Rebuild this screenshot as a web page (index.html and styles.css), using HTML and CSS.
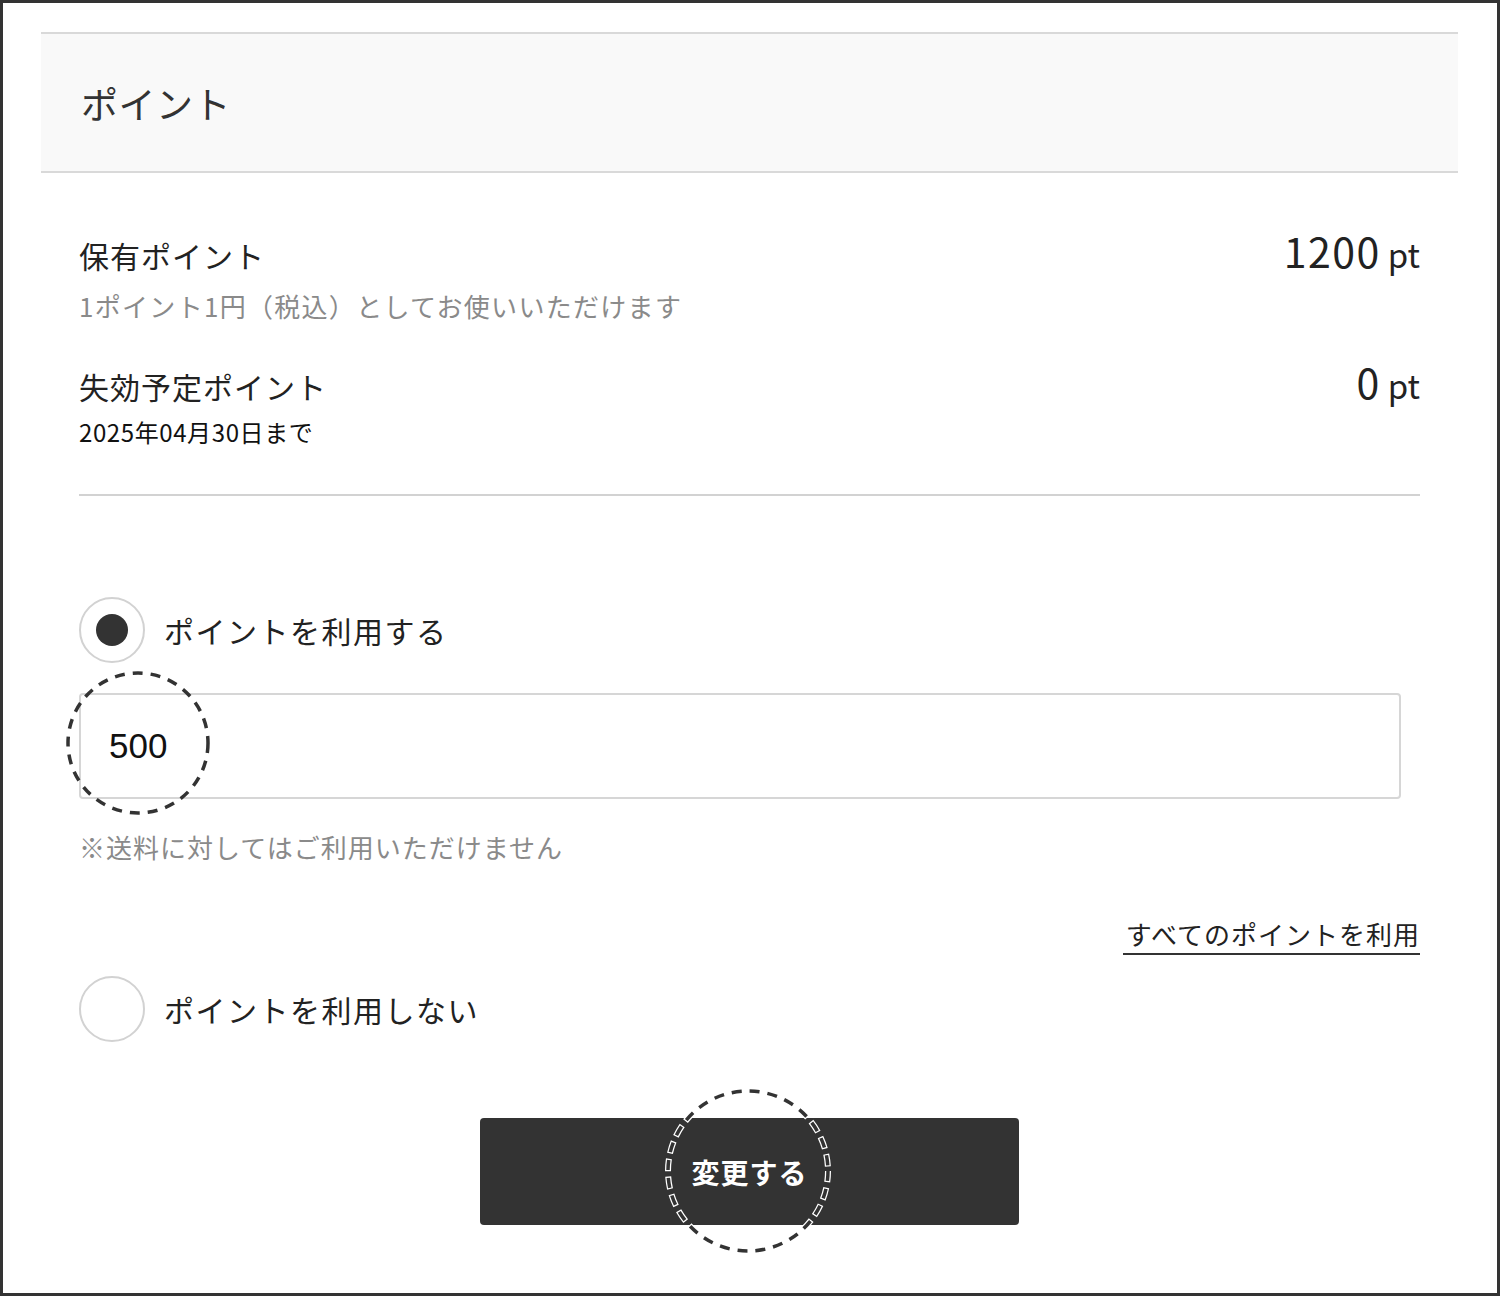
FILE: index.html
```html
<!DOCTYPE html>
<html lang="ja">
<head>
<meta charset="utf-8">
<title>ポイント</title>
<link rel="stylesheet" href="styles.css">
</head>
<body>
<div class="page">
  <div class="panel-head">
    <h2 class="panel-title">ポイント</h2>
  </div>
  <div class="panel-body">
    <div class="info-row first">
      <div class="info-left">
        <div class="info-label">保有ポイント</div>
        <div class="info-sub">1ポイント1円（税込）としてお使いいただけます</div>
      </div>
      <div class="info-value"><span class="num">1200</span><span class="unit">pt</span></div>
    </div>
    <div class="info-row second">
      <div class="info-left">
        <div class="info-label">失効予定ポイント</div>
        <div class="info-date">2025年04月30日まで</div>
      </div>
      <div class="info-value"><span class="num">0</span><span class="unit">pt</span></div>
    </div>
    <div class="divider"></div>

    <label class="radio-row use">
      <span class="radio checked"><span class="dot"></span></span>
      <span class="radio-label">ポイントを利用する</span>
    </label>

    <div class="input-wrap">
      <div class="point-input">500</div>
      <svg class="mark mark-input" width="146" height="146" viewBox="0 0 146 146">
        <circle cx="73" cy="73" r="70" fill="none" stroke="#333" stroke-width="3.5" stroke-dasharray="10 8"/>
      </svg>
    </div>

    <div class="note">※送料に対してはご利用いただけません</div>

    <div class="link-row"><a class="all-link">すべてのポイントを利用</a></div>

    <label class="radio-row nouse">
      <span class="radio"></span>
      <span class="radio-label">ポイントを利用しない</span>
    </label>

    <div class="btn-row">
      <div class="btn-wrap">
        <button class="submit">変更する</button>
        <svg class="mark mark-btn" width="166" height="166" viewBox="0 0 166 166">
          <circle cx="83" cy="83" r="80" fill="none" stroke="#fff" stroke-width="6" stroke-dasharray="12.5 5.5" stroke-dashoffset="1.25"/>
          <circle cx="83" cy="83" r="80" fill="none" stroke="#333" stroke-width="3.5" stroke-dasharray="10 8"/>
        </svg>
      </div>
    </div>
  </div>
</div>
</body>
</html>
```

FILE: styles.css
```css
* { box-sizing: border-box; }

html, body {
  margin: 0;
  padding: 0;
}

body {
  width: 1500px;
  height: 1296px;
  border: 3px solid #333;
  background: #fff;
  font-family: "Noto Sans CJK JP", "Noto Sans", sans-serif;
  color: #222;
  overflow: hidden;
}

.page {
  padding: 29px 39px 0 38px;
}

.panel-head {
  height: 141px;
  background: #f9f9f9;
  border-top: 2px solid #d9d9d9;
  border-bottom: 2px solid #d9d9d9;
  display: flex;
  align-items: center;
  padding-left: 40px;
}

.panel-title {
  margin: 0;
  font-size: 37px;
  font-weight: 400;
  line-height: 44px;
  color: #333;
  letter-spacing: 0.5px;
}

.panel-body {
  padding: 0 38px;
}

.info-row {
  display: flex;
  justify-content: space-between;
  align-items: baseline;
}

.info-row.first { margin-top: 57px; }
.info-row.second { margin-top: 37px; }

.info-label {
  font-size: 30px;
  line-height: 40px;
  letter-spacing: 1px;
  color: #222;
}

.info-sub {
  margin-top: 13px;
  font-size: 26px;
  line-height: 36px;
  letter-spacing: 1.3px;
  color: #8a8a8a;
}

.info-date {
  margin-top: 10px;
  font-size: 24px;
  line-height: 32px;
  letter-spacing: 0.6px;
  color: #111;
}

.info-value {
  line-height: 40px;
  color: #222;
  white-space: nowrap;
}

.info-value .num {
  font-size: 41px;
  letter-spacing: 1.5px;
}

.info-value .unit {
  font-size: 33px;
  margin-left: 7px;
}

.divider {
  margin-top: 46px;
  height: 2px;
  background: #d2d2d2;
}

.radio-row {
  display: flex;
  align-items: center;
  gap: 19px;
  height: 66px;
}

.radio-row.use { margin-top: 101px; }
.radio-row.nouse { margin-top: 21px; }

.radio {
  width: 66px;
  height: 66px;
  border: 2px solid #d2d2d2;
  border-radius: 50%;
  display: flex;
  align-items: center;
  justify-content: center;
  flex: none;
  background: #fff;
}

.radio .dot {
  width: 32px;
  height: 32px;
  border-radius: 50%;
  background: #333;
}

.radio-label {
  font-size: 30px;
  line-height: 40px;
  letter-spacing: 1.5px;
  color: #222;
}

.input-wrap {
  position: relative;
  margin-top: 30px;
  width: 1322px;
}

.point-input {
  height: 106px;
  border: 2px solid #d6d6d6;
  border-radius: 4px;
  padding-left: 28px;
  display: flex;
  align-items: center;
  font-family: "Liberation Sans", Arial, sans-serif;
  font-size: 35px;
  color: #111;
}

.mark {
  position: absolute;
  pointer-events: none;
}

.mark-input {
  left: -14px;
  top: -23px;
}

.note {
  margin-top: 30px;
  font-size: 26px;
  line-height: 36px;
  letter-spacing: 1px;
  color: #8a8a8a;
}

.link-row {
  margin-top: 51px;
  text-align: right;
}

.all-link {
  display: inline-block;
  font-size: 26px;
  line-height: 36px;
  letter-spacing: 1px;
  padding: 0 0 1px 3px;
  border-bottom: 2px solid #333;
  color: #222;
  text-decoration: none;
}

.btn-row {
  margin-top: 76px;
  display: flex;
  justify-content: center;
}

.btn-wrap {
  position: relative;
}

.submit {
  display: block;
  width: 539px;
  height: 107px;
  border: none;
  border-radius: 4px;
  background: #333;
  color: #fff;
  font-family: "Noto Sans CJK JP", "Noto Sans", sans-serif;
  font-size: 28px;
  font-weight: 700;
  letter-spacing: 1px;
  padding: 0;
}

.mark-btn {
  left: 185px;
  top: -30px;
}
```
